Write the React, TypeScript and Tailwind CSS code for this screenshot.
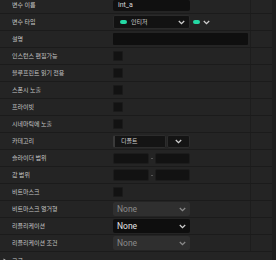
import React from "react";

const KR = { fontFamily: '"Noto Sans CJK KR", "Noto Sans", sans-serif' };
const LAT = { fontFamily: 'Roboto, "Noto Sans", sans-serif' };

function Chevron({ className = "" }: { className?: string }) {
  return (
    <svg width="7" height="5" viewBox="0 0 7 5" className={className}>
      <path d="M0.8 1 L3.5 3.6 L6.2 1" stroke="currentColor" strokeWidth="1.3" fill="none" />
    </svg>
  );
}

function Check() {
  return <div className="w-[10px] h-[10px] bg-[#121212] border border-[#1a1a1a] rounded-[1px]" />;
}

function Row({ label, children }: { label: string; children?: React.ReactNode }) {
  return (
    <div className="flex shrink-0 h-[17px] border-b border-[#1b1b1b]">
      <div className="w-[113px] flex items-center pl-[12px] text-[6px] text-[#c4c4c4] leading-none whitespace-nowrap" style={KR}>
        {label}
      </div>
      <div className="w-[137px] flex items-center">{children}</div>
      <div className="flex-1 border-l border-[#1d1d1d]" />
    </div>
  );
}

function NoneSelect({ dark = false }: { dark?: boolean }) {
  return (
    <div
      className={`w-[77px] h-[14px] rounded-[2px] flex items-center justify-between pl-[4px] pr-[4px] ${
        dark ? "bg-[#0e0e0e] text-[#e4e4e4]" : "bg-[#2f2f2f] text-[#8a8a8a]"
      }`}
    >
      <span className="text-[8.5px] leading-none" style={LAT}>None</span>
      <Chevron className={dark ? "text-[#d0d0d0]" : "text-[#8a8a8a]"} />
    </div>
  );
}

export default function App() {
  return (
    <div className="w-[276px] h-[260px] overflow-hidden bg-[#1e1e1e] flex items-start">
      <div className="w-[272px] bg-[#242424] -mt-[3px] flex flex-col shrink-0">
        <Row label="변수 이름">
          <div className="w-[77px] h-[11px] bg-[#101010] rounded-[2px] flex items-center pl-[5px] text-[7px] text-[#d8d8d8] leading-none" style={LAT}>
            int_a
          </div>
        </Row>
        <Row label="변수 타입">
          <div className="w-[77px] h-[14px] bg-[#121212] border border-[#2a2a2a] rounded-[2px] flex items-center pl-[6px] pr-[4px]">
            <div className="w-[7px] h-[4px] rounded-full bg-[#24d8a4]" />
            <span className="ml-[4px] text-[6px] text-[#cfcfcf] leading-none" style={KR}>인티저</span>
            <Chevron className="ml-auto text-[#cfcfcf]" />
          </div>
          <div className="ml-[3px] w-[7px] h-[4px] rounded-full bg-[#24d8a4]" />
          <Chevron className="ml-[3px] text-[#cfcfcf]" />
        </Row>
        <Row label="설명">
          <div className="w-[135px] h-[12px] bg-[#0f0f0f] rounded-[1px]" />
        </Row>
        <Row label="인스턴스 편집가능"><Check /></Row>
        <Row label="블루프린트 읽기 전용"><Check /></Row>
        <Row label="스폰시 노출"><Check /></Row>
        <Row label="프라이빗"><Check /></Row>
        <Row label="시네마틱에 노출"><Check /></Row>
        <Row label="카테고리">
          <div className="w-[77px] h-[13px] flex">
            <div className="w-[53px] h-full bg-[#141414] border border-[#2c2c2c] border-l-[2px] border-l-[#3a3a3a] rounded-[2px] flex items-center pl-[6px] text-[6px] text-[#d0d0d0] leading-none" style={KR}>
              디폴트
            </div>
            <div className="ml-[1px] flex-1 h-full bg-[#141414] border border-[#2c2c2c] rounded-[2px] flex items-center justify-center text-[#d0d0d0]">
              <Chevron />
            </div>
          </div>
        </Row>
        <Row label="슬라이더 범위">
          <div className="w-[77px] flex items-center">
            <div className="w-[36px] h-[11px] bg-[#121212] border border-[#1c1c1c] rounded-[2px]" />
            <div className="mx-auto w-[2px] h-[1px] bg-[#555]" />
            <div className="w-[35px] h-[11px] bg-[#121212] border border-[#1c1c1c] rounded-[2px]" />
          </div>
        </Row>
        <Row label="값 범위">
          <div className="w-[77px] flex items-center">
            <div className="w-[36px] h-[12px] bg-[#121212] border border-[#1c1c1c] rounded-[2px]" />
            <div className="mx-auto w-[2px] h-[1px] bg-[#555]" />
            <div className="w-[35px] h-[12px] bg-[#121212] border border-[#1c1c1c] rounded-[2px]" />
          </div>
        </Row>
        <Row label="비트마스크"><Check /></Row>
        <Row label="비트마스크 열거형"><NoneSelect /></Row>
        <Row label="리플리케이션"><NoneSelect dark /></Row>
        <Row label="리플리케이션 조건"><NoneSelect /></Row>
        <div className="h-[17px] shrink-0 flex items-center pl-[3px]">
          <svg width="5" height="6" viewBox="0 0 5 6"><path d="M0.5 0.5 L4.5 3 L0.5 5.5 Z" fill="#bdbdbd" /></svg>
          <span className="ml-[4px] text-[6px] text-[#c4c4c4] leading-none" style={KR}>고급</span>
        </div>
      </div>
    </div>
  );
}
